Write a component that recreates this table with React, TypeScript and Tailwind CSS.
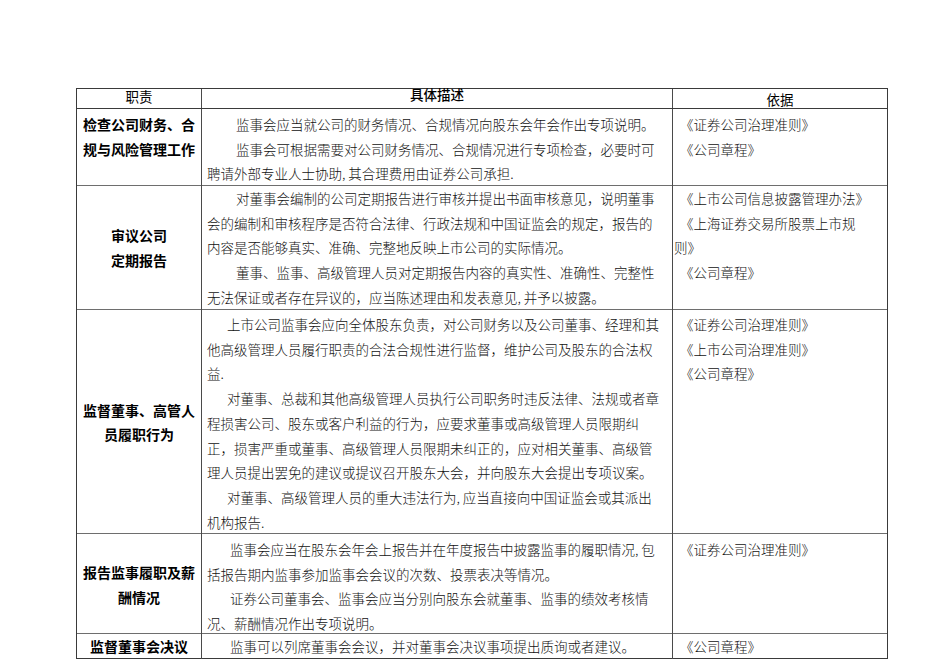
import React from "react";

type Line = { t: string; indent?: number };

const Cell2 = ({ lines, pt }: { lines: Line[]; pt: string }) => (
  <div className={`border-r border-[#4a4a4a] pl-[5px] ${pt}`}>
    {lines.map((l, i) => (
      <div
        key={i}
        className="whitespace-nowrap leading-[24.7px]"
        style={{ paddingLeft: l.indent ?? 0 }}
      >
        {l.t}
      </div>
    ))}
  </div>
);

const Cell3 = ({ lines, pt }: { lines: string[]; pt: string }) => (
  <div className={`pl-[1px] ${pt}`}>
    {lines.map((l, i) => (
      <div
        key={i}
        className={`whitespace-nowrap leading-[24.7px] ${l.startsWith("《") ? "pl-[6px]" : ""}`}
      >
        {l}
      </div>
    ))}
  </div>
);

const Cell1 = ({ lines, top }: { lines: string[]; top?: boolean }) => (
  <div
    className={`flex flex-col items-center border-r border-[#4a4a4a] text-[14px] font-bold text-black ${
      top ? "justify-start pt-[3px]" : "justify-center"
    }`}
  >
    {lines.map((l, i) => (
      <div key={i} className="whitespace-nowrap leading-[24.5px]">
        {l}
      </div>
    ))}
  </div>
);

export default function App() {
  const row = "grid grid-cols-[125px_471px_1fr] border-b border-[#6e6e6e]";
  return (
    <div className="min-h-[672px] w-[950px] bg-white pt-[88px] pl-[76px] font-['Noto_Sans_CJK_SC',sans-serif] text-[13.5px] font-light text-[#111]">
      <div className="w-[812px] border border-[#3a3a3a]">
        {/* header */}
        <div className="grid h-[20px] grid-cols-[125px_471px_1fr] border-b border-[#3a3a3a] text-[13.5px] text-black">
          <div className="border-r border-[#4a4a4a] text-center leading-[15px] font-normal">职责</div>
          <div className="border-r border-[#4a4a4a] text-center leading-[11px] font-medium">具体描述</div>
          <div className="pt-[2px] text-center leading-[16px] font-normal">依据</div>
        </div>

        {/* row 1 */}
        <div className={`${row} h-[77px]`}>
          <Cell1 lines={["检查公司财务、合", "规与风险管理工作"]} top />
          <Cell2
            pt="pt-[3px]"
            lines={[
              { t: "监事会应当就公司的财务情况、合规情况向股东会年会作出专项说明。", indent: 29 },
              { t: "监事会可根据需要对公司财务情况、合规情况进行专项检查，必要时可", indent: 29 },
              { t: "聘请外部专业人士协助, 其合理费用由证券公司承担." },
            ]}
          />
          <Cell3 pt="pt-[3px]" lines={["《证券公司治理准则》", "《公司章程》"]} />
        </div>

        {/* row 2 */}
        <div className={`${row} h-[124px]`}>
          <Cell1 lines={["审议公司", "定期报告"]} />
          <Cell2
            pt="pt-[0px]"
            lines={[
              { t: "对董事会编制的公司定期报告进行审核并提出书面审核意见，说明董事", indent: 29 },
              { t: "会的编制和审核程序是否符合法律、行政法规和中国证监会的规定，报告的" },
              { t: "内容是否能够真实、准确、完整地反映上市公司的实际情况。" },
              { t: "董事、监事、高级管理人员对定期报告内容的真实性、准确性、完整性", indent: 29 },
              { t: "无法保证或者存在异议的，应当陈述理由和发表意见, 并予以披露。" },
            ]}
          />
          <Cell3
            pt="pt-[0px]"
            lines={["《上市公司信息披露管理办法》", "《上海证券交易所股票上市规", "则》", "《公司章程》"]}
          />
        </div>

        {/* row 3 */}
        <div className={`${row} h-[224px]`}>
          <Cell1 lines={["监督董事、高管人", "员履职行为"]} />
          <Cell2
            pt="pt-[2px]"
            lines={[
              { t: "上市公司监事会应向全体股东负责，对公司财务以及公司董事、经理和其", indent: 20 },
              { t: "他高级管理人员履行职责的合法合规性进行监督，维护公司及股东的合法权" },
              { t: "益." },
              { t: "对董事、总裁和其他高级管理人员执行公司职务时违反法律、法规或者章", indent: 20 },
              { t: "程损害公司、股东或客户利益的行为，应要求董事或高级管理人员限期纠" },
              { t: "正，损害严重或董事、高级管理人员限期未纠正的，应对相关董事、高级管" },
              { t: "理人员提出罢免的建议或提议召开股东大会，并向股东大会提出专项议案。" },
              { t: "对董事、高级管理人员的重大违法行为, 应当直接向中国证监会或其派出", indent: 20 },
              { t: "机构报告." },
            ]}
          />
          <Cell3 pt="pt-[2px]" lines={["《证券公司治理准则》", "《上市公司治理准则》", "《公司章程》"]} />
        </div>

        {/* row 4 */}
        <div className={`${row} h-[100px]`}>
          <Cell1 lines={["报告监事履职及薪", "酬情况"]} />
          <Cell2
            pt="pt-[3px]"
            lines={[
              { t: "监事会应当在股东会年会上报告并在年度报告中披露监事的履职情况, 包", indent: 23 },
              { t: "括报告期内监事参加监事会会议的次数、投票表决等情况。" },
              { t: "证券公司董事会、监事会应当分别向股东会就董事、监事的绩效考核情", indent: 23 },
              { t: "况、薪酬情况作出专项说明。" },
            ]}
          />
          <Cell3 pt="pt-[3px]" lines={["《证券公司治理准则》"]} />
        </div>

        {/* row 5 */}
        <div className="grid h-[24px] grid-cols-[125px_471px_1fr]">
          <Cell1 lines={["监督董事会决议"]} />
          <Cell2
            pt="pt-[0px]"
            lines={[{ t: "监事可以列席董事会会议，并对董事会决议事项提出质询或者建议。", indent: 23 }]}
          />
          <Cell3 pt="pt-[0px]" lines={["《公司章程》"]} />
        </div>
      </div>
    </div>
  );
}
